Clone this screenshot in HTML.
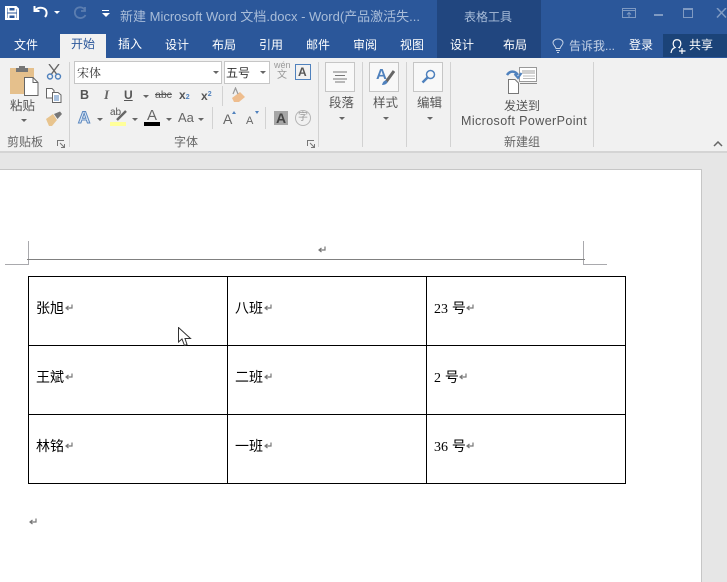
<!DOCTYPE html>
<html><head><meta charset="utf-8">
<style>
html,body{margin:0;padding:0}
#r{position:relative;width:727px;height:582px;overflow:hidden;background:#e6e6e6;font-family:"Liberation Sans","Noto Sans CJK SC",sans-serif;font-size:12px;color:#555}
#r div,#r span.a,#r svg{position:absolute}
.t{white-space:nowrap;line-height:16px}
.w{color:#fff}
.v{width:1px;background:#d2d2d2;top:62px;height:85px}
.box{width:28px;height:28px;border:1px solid #c6c6c6;background:#f8f8f8;top:62px}
.dd{width:0;height:0;border-left:3px solid transparent;border-right:3px solid transparent;border-top:3px solid #666}
.d{font-family:"Liberation Sans","WenQuanYi Zen Hei","Noto Sans CJK SC",sans-serif;font-size:14px;color:#000;line-height:16px;white-space:nowrap}
.n{font-family:"Liberation Serif",serif;font-size:14px;letter-spacing:0}
.b{background:#000}
.g{background:#a9a9ad}
</style></head><body>
<div id="r">
<div style="left:0;top:0;width:727px;height:58px;background:#2b579a"></div>
<div style="left:437px;top:0;width:104px;height:58px;background:#21467f"></div>
<div style="left:663px;top:34px;width:64px;height:23px;background:#1b4378"></div>
<div style="left:60px;top:34px;width:46px;height:24px;background:#f1f1f1"></div>

<svg style="left:5px;top:6px" width="14" height="14" viewBox="0 0 14 14"><path d="M1 1H11L13 3V13H1Z M3.500 1V5.500H10.500V1 M3.500 13V8.500H10.500V13" fill="none" stroke="#fff" stroke-width="2"/></svg>
<svg style="left:33px;top:5px" width="17" height="14" viewBox="0 0 17 14"><path d="M1.500 1V6H6.500 M2 6C4 2.500 8 2 11 3.500 14 5 14.500 9 12 12" fill="none" stroke="#fff" stroke-width="2"/></svg>
<div class="dd" style="left:54px;top:11px;border-top-color:#fff"></div>
<svg style="left:73px;top:6px" width="15" height="13" viewBox="0 0 15 13"><path d="M12 1V5H8 M12 4C10 1 6 .5 3.500 2.500 1 5 1.500 9 4 11 7 13 11 12 12.500 9" fill="none" stroke="#5b7db0" stroke-width="1.800"/></svg>
<div style="left:102px;top:10px;width:7px;height:1px;background:#fff"></div>
<div class="dd" style="left:102px;top:13px;border-left-width:4px;border-right-width:4px;border-top:4px solid #fff;width:0"></div>
<div class="t" style="left:120px;top:9px;font-size:13px;color:#a9bdd9">新建 Microsoft Word 文档.docx - Word(产品激活失...</div>
<div class="t" style="left:464px;top:9px;color:#a9bdd9">表格工具</div>

<svg style="left:622px;top:8px" width="14" height="10" viewBox="0 0 14 10"><path d="M.5.500H13.500V9.500H.5ZM.5 2.500H13.500M7 9V4.500M5 6.500L7 4.500 9 6.500" fill="none" stroke="#7f9ac2"/></svg>
<div style="left:654px;top:14px;width:9px;height:2px;background:#7f9ac2"></div>
<div style="left:683px;top:8px;width:8px;height:7px;border:1px solid #7f9ac2;border-top-width:2px"></div>
<svg style="left:716px;top:8px" width="11" height="10" viewBox="0 0 11 10"><path d="M1 0L10 9.500M10 0L1 9.500" stroke="#7f9ac2" stroke-width="1.500"/></svg>

<div class="t w" style="left:14px;top:37px">文件</div>
<div class="t" style="left:71px;top:36px;color:#2b579a">开始</div>
<div class="t w" style="left:118px;top:36px">插入</div>
<div class="t w" style="left:165px;top:37px">设计</div>
<div class="t w" style="left:212px;top:37px">布局</div>
<div class="t w" style="left:259px;top:37px">引用</div>
<div class="t w" style="left:306px;top:37px">邮件</div>
<div class="t w" style="left:353px;top:37px">审阅</div>
<div class="t w" style="left:400px;top:37px">视图</div>
<div class="t w" style="left:450px;top:37px">设计</div>
<div class="t w" style="left:503px;top:37px">布局</div>
<svg style="left:552px;top:38px" width="12" height="15" viewBox="0 0 12 15"><path d="M4 10.500C3.500 8 1 7 1 4.800 1 2.500 3.300 1 6 1S11 2.500 11 4.800C11 7 8.500 8 8 10.500ZM4 12.500H8M5 14.500H7" fill="none" stroke="#c5d2e6"/></svg>
<div class="t" style="left:569px;top:38px;color:#c5d2e6">告诉我...</div>
<div class="t w" style="left:629px;top:37px">登录</div>
<svg style="left:670px;top:38px" width="16" height="16" viewBox="0 0 16 16"><path d="M1 15C1.500 11 3.500 10 5 9.500 3 8 3 5.500 3.500 4 4.500 1 9.500 1 10.500 4 11 5.500 11 8 9 9.500L10 10M12 10V16M9 13H15.500" fill="none" stroke="#fff" stroke-width="1.200"/></svg>
<div class="t w" style="left:689px;top:37px">共享</div>

<!-- ribbon -->
<div style="left:0;top:58px;width:727px;height:93px;background:#f1f1f1"></div>
<div style="left:0;top:151px;width:727px;height:2px;background:#d4d4d4"></div>
<div class="v" style="left:69px"></div>
<div class="v" style="left:318px"></div>
<div class="v" style="left:362px"></div>
<div class="v" style="left:406px"></div>
<div class="v" style="left:450px"></div>
<div class="v" style="left:593px"></div>

<!-- clipboard -->
<svg style="left:9px;top:65px" width="30" height="31" viewBox="0 0 30 31"><path d="M1 3H25V29H1Z" fill="#e5c08c"/><path d="M7 3H19V7H7Z" fill="#767676"/><path d="M10 1H16V4H10Z" fill="#767676"/><path d="M15.500 12.500H24L29 17.500V30.500H15.500Z" fill="#fff" stroke="#666"/><path d="M24 12.500V17.500H29" fill="none" stroke="#666"/></svg>
<div class="t" style="left:10px;top:98px;font-size:12.500px">粘贴</div>
<div class="dd" style="left:21px;top:119px"></div>
<svg style="left:46px;top:64px" width="16" height="16" viewBox="0 0 16 16"><path d="M3 0L10.500 10M13 0L5.500 10" stroke="#666" stroke-width="1.400"/><circle cx="4" cy="12.500" r="2.500" fill="none" stroke="#4f81bd" stroke-width="1.400"/><circle cx="12" cy="12.500" r="2.500" fill="none" stroke="#4f81bd" stroke-width="1.400"/></svg>
<svg style="left:46px;top:88px" width="16" height="15" viewBox="0 0 16 15"><path d="M.5.500H6L8 2.500V10H.5Z" fill="#fff" stroke="#666"/><path d="M6.500 4.500H12L15 7V14.500H6.500Z" fill="#fff" stroke="#666"/><path d="M8 8H13M8 10H13M8 12H13" stroke="#4f81bd"/></svg>
<svg style="left:46px;top:111px" width="17" height="15" viewBox="0 0 17 15"><path d="M0 8L7 3 11 9 6 15H3Z" fill="#e8c48e"/><path d="M8 3L14 .5 16 3 11.500 8Z" fill="#777"/></svg>
<div class="t" style="left:7px;top:134px;color:#666">剪贴板</div>
<svg style="left:57px;top:140px" width="8" height="8" viewBox="0 0 8 8"><path d="M.5 6V.5H7M3 3L7.500 7.500M7.500 4V7.500H4" fill="none" stroke="#777"/></svg>

<!-- font -->
<div style="left:74px;top:61px;width:146px;height:21px;background:#fff;border:1px solid #c6c6c6"></div>
<div class="t" style="left:77px;top:65px;color:#333;font-family:'Liberation Serif','Noto Serif CJK SC',serif">宋体</div>
<div class="dd" style="left:213px;top:71px"></div>
<div style="left:224px;top:61px;width:44px;height:21px;background:#fff;border:1px solid #c6c6c6"></div>
<div class="t" style="left:226px;top:65px;color:#333">五号</div>
<div class="dd" style="left:260px;top:71px"></div>
<div class="t" style="left:274px;top:60px;font-size:9px;line-height:10px;color:#999">wén</div>
<div class="t" style="left:277px;top:70px;font-size:10px;line-height:11px;color:#999">文</div>
<div style="left:295px;top:64px;width:14px;height:14px;border:1px solid #4f81bd"></div>
<div class="t" style="left:298px;top:64px;font-size:12px;font-weight:bold;color:#555">A</div>

<div class="t" style="left:80px;top:87px;font-weight:bold;font-size:12.500px">B</div>
<div class="t" style="left:104px;top:87px;font-style:italic;font-family:'Liberation Serif',serif;font-size:13px;font-weight:bold;color:#666">I</div>
<div class="t" style="left:124px;top:87px;font-weight:bold;font-size:12px;text-decoration:underline">U</div>
<div class="dd" style="left:143px;top:95px"></div>
<div class="t" style="left:155px;top:87px;font-size:10.500px;text-decoration:line-through">abc</div>
<div class="t" style="left:179px;top:87px;font-weight:bold">x<span style="font-size:7px;color:#4f81bd">2</span></div>
<div class="t" style="left:201px;top:87px;font-weight:bold">x<span style="font-size:7px;color:#4f81bd;vertical-align:4px">2</span></div>
<div style="left:222px;top:86px;width:1px;height:20px;background:#d2d2d2"></div>
<svg style="left:231px;top:87px" width="16" height="16" viewBox="0 0 16 16"><path d="M1 11L9 5 14 10 8 15H3Z" fill="#eebd8e"/><path d="M2 7L4.500 1 7 7" fill="none" stroke="#999" stroke-width="1.200"/></svg>

<div class="t" style="left:78px;top:108px;font-size:17px;line-height:20px;font-weight:bold;color:#dfe9f5;-webkit-text-stroke:1px #5b88c0">A</div>
<div class="dd" style="left:97px;top:118px"></div>
<div class="t" style="left:110px;top:107px;font-size:10px;line-height:11px">ab</div>
<svg style="left:116px;top:110px" width="12" height="12" viewBox="0 0 12 12"><path d="M1 10L10 1" stroke="#666" stroke-width="2.500"/></svg>
<div style="left:110px;top:122px;width:16px;height:4px;background:#ffff9a"></div>
<div class="dd" style="left:132px;top:118px"></div>
<div class="t" style="left:147px;top:108px;font-size:15px;color:#666">A</div>
<div style="left:144px;top:122px;width:16px;height:4px;background:#000"></div>
<div class="dd" style="left:166px;top:118px"></div>
<div class="t" style="left:178px;top:110px;font-size:13px;color:#666">Aa</div>
<div class="dd" style="left:198px;top:118px"></div>
<div style="left:212px;top:107px;width:1px;height:22px;background:#d2d2d2"></div>
<div class="t" style="left:223px;top:111px;font-size:14px;color:#666">A</div>
<div style="left:232px;top:111px;width:0;height:0;border-left:2.500px solid transparent;border-right:2.500px solid transparent;border-bottom:3px solid #4f81bd"></div>
<div class="t" style="left:246px;top:113px;font-size:11px;color:#666">A</div>
<div style="left:255px;top:111px;width:0;height:0;border-left:2.500px solid transparent;border-right:2.500px solid transparent;border-top:3px solid #4f81bd"></div>
<div style="left:265px;top:107px;width:1px;height:22px;background:#d2d2d2"></div>
<div style="left:274px;top:111px;width:14px;height:14px;background:#a6a6a6"></div>
<div class="t" style="left:276px;top:110px;font-size:14px;font-weight:bold;color:#444">A</div>
<div style="left:295px;top:110px;width:14px;height:14px;border:1px solid #b5b5b5;border-radius:50%"></div>
<div class="t" style="left:298px;top:110px;font-size:10px;color:#999">字</div>
<div class="t" style="left:174px;top:134px;color:#666">字体</div>
<svg style="left:307px;top:140px" width="8" height="8" viewBox="0 0 8 8"><path d="M.5 6V.5H7M3 3L7.500 7.500M7.500 4V7.500H4" fill="none" stroke="#777"/></svg>

<!-- paragraph/style/edit -->
<div class="box" style="left:325px"></div>
<svg style="left:332px;top:71px" width="16" height="12" viewBox="0 0 16 12"><path d="M1 1H15M3 4.500H13M1 8H15M3 11H13" stroke="#777"/></svg>
<div class="t" style="left:329px;top:95px;font-size:12.500px">段落</div>
<div class="dd" style="left:339px;top:117px"></div>
<div class="box" style="left:369px"></div>
<div class="t" style="left:376px;top:67px;font-size:15px;font-weight:bold;color:#4f81bd">A</div>
<svg style="left:380px;top:70px" width="15" height="16" viewBox="0 0 15 16"><path d="M6 12L14 1" stroke="#666" stroke-width="3"/><path d="M2 15C3 11 5 10 7 11 8 13 6 15 2 15Z" fill="#4f81bd"/></svg>
<div class="t" style="left:373px;top:95px;font-size:12.500px">样式</div>
<div class="dd" style="left:383px;top:117px"></div>
<div class="box" style="left:413px"></div>
<svg style="left:421px;top:69px" width="15" height="15" viewBox="0 0 15 15"><circle cx="9.500" cy="5.500" r="4" fill="none" stroke="#4f81bd" stroke-width="1.500"/><path d="M6.500 8.500L1.500 13.500" stroke="#4f81bd" stroke-width="2.500"/></svg>
<div class="t" style="left:417px;top:95px;font-size:12.500px">编辑</div>
<div class="dd" style="left:427px;top:117px"></div>

<!-- send to -->
<svg style="left:506px;top:65px" width="32" height="30" viewBox="0 0 32 30"><path d="M13.500 2.500H30.500V16.500H13.500Z" fill="#fff" stroke="#999"/><path d="M16 5H29V9H16Z" fill="#d0d0d0"/><path d="M17 11H29M17 13.500H29" stroke="#bbb"/><path d="M14 18.500H31" stroke="#888"/><path d="M2.500 14.500H9L12.500 18V28.500H2.500Z" fill="#fff" stroke="#777"/><path d="M1 10C4 5.500 9 5.500 12 10" fill="none" stroke="#4f81bd" stroke-width="2.500"/><path d="M8.500 9L12 13 15.500 8" fill="none" stroke="#4f81bd" stroke-width="2"/></svg>
<div class="t" style="left:504px;top:98px;color:#555">发送到</div>
<div class="t" style="left:461px;top:113px;font-size:12.500px;color:#555;letter-spacing:.4px">Microsoft PowerPoint</div>
<div class="t" style="left:504px;top:134px;color:#666">新建组</div>
<svg style="left:713px;top:141px" width="10" height="6" viewBox="0 0 10 6"><path d="M1 5L5 1 9 5" fill="none" stroke="#666" stroke-width="1.500"/></svg>

<!-- page -->
<div style="left:0;top:169px;width:701px;height:413px;background:#fff;border-top:1px solid #c6c6c6;border-right:1px solid #c6c6c6"></div>
<div class="g" style="left:28px;top:241px;width:1px;height:24px"></div>
<div class="g" style="left:5px;top:264px;width:24px;height:1px"></div>
<div class="g" style="left:583px;top:241px;width:1px;height:24px"></div>
<div class="g" style="left:583px;top:264px;width:24px;height:1px"></div>
<div style="left:27px;top:259px;width:558px;height:1px;background:#808080"></div>
<svg style="left:318px;top:246px" width="8" height="8" viewBox="0 0 8 8"><path d="M7 .5V4H1.500M3.500 2L1 4 3.500 6" fill="none" stroke="#777" stroke-width="1.200"/></svg>

<!-- table -->
<div class="b" style="left:28px;top:276px;width:598px;height:1px"></div>
<div class="b" style="left:28px;top:345px;width:598px;height:1px"></div>
<div class="b" style="left:28px;top:414px;width:598px;height:1px"></div>
<div class="b" style="left:28px;top:483px;width:598px;height:1px"></div>
<div class="b" style="left:28px;top:276px;width:1px;height:208px"></div>
<div class="b" style="left:227px;top:276px;width:1px;height:208px"></div>
<div class="b" style="left:426px;top:276px;width:1px;height:208px"></div>
<div class="b" style="left:625px;top:276px;width:1px;height:208px"></div>

<div class="d" style="left:36px;top:300px">张旭</div>
<div class="d" style="left:235px;top:300px">八班</div>
<div class="d" style="left:434px;top:300px"><span class="n">23</span> 号</div>
<div class="d" style="left:36px;top:369px">王斌</div>
<div class="d" style="left:235px;top:369px">二班</div>
<div class="d" style="left:434px;top:369px"><span class="n">2</span> 号</div>
<div class="d" style="left:36px;top:438px">林铭</div>
<div class="d" style="left:235px;top:438px">一班</div>
<div class="d" style="left:434px;top:438px"><span class="n">36</span> 号</div>

<svg width="0" height="0" style="left:0;top:0"><defs><path id="rm" d="M7 .5V4H1.500M3.500 2L1 4 3.500 6" fill="none" stroke="#777" stroke-width="1.200"/></defs></svg>
<svg style="left:65px;top:304px" width="8" height="8"><use href="#rm"/></svg>
<svg style="left:264px;top:304px" width="8" height="8"><use href="#rm"/></svg>
<svg style="left:466px;top:304px" width="8" height="8"><use href="#rm"/></svg>
<svg style="left:65px;top:373px" width="8" height="8"><use href="#rm"/></svg>
<svg style="left:264px;top:373px" width="8" height="8"><use href="#rm"/></svg>
<svg style="left:459px;top:373px" width="8" height="8"><use href="#rm"/></svg>
<svg style="left:65px;top:442px" width="8" height="8"><use href="#rm"/></svg>
<svg style="left:264px;top:442px" width="8" height="8"><use href="#rm"/></svg>
<svg style="left:466px;top:442px" width="8" height="8"><use href="#rm"/></svg>
<svg style="left:29px;top:518px" width="8" height="8"><use href="#rm"/></svg>

<!-- cursor -->
<svg style="left:178px;top:327px" width="14" height="20" viewBox="0 0 14 20"><path d="M.5.500V15L4 12 6.500 18.500 9 17.500 7 11.500H12.500Z" fill="#fff" stroke="#333"/></svg>

<div style="left:702px;top:169px;width:25px;height:413px;background:#e6e6e6"></div>
</div>
</body></html>
